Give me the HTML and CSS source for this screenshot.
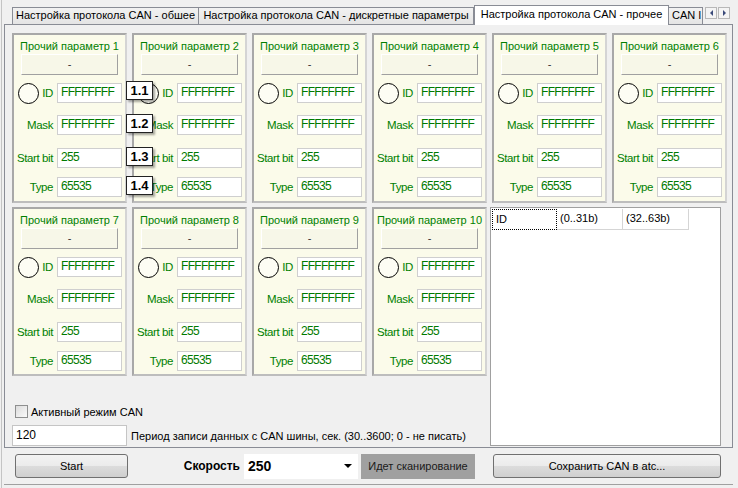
FILE: index.html
```html
<!DOCTYPE html>
<html lang="ru">
<head>
  <meta charset="UTF-8" />
  <title>Настройка протокола CAN</title>
  <link rel="stylesheet" href="styles.css">
</head>
<body>
  <div class="window">
    <div class="tabstrip">
      <div class="tabs">
        <div class="tab t1">Настройка протокола CAN - обшее</div>
        <div class="tab t2">Настройка протокола CAN - дискретные параметры</div>
        <div class="tab t3 active">Настройка протокола CAN - прочее</div>
        <div class="tab t4">CAN I</div>
      </div>
      <div class="scroll">
        <span class="arrow"><i class="tri left"></i></span>
        <span class="arrow"><i class="tri right"></i></span>
      </div>
    </div>

    <div class="page">
      <div class="grid">
        <div class="panel first">
          <div class="title">Прочий параметр 1</div>
          <div class="name">-</div>
          <div class="row r-id"><span class="lamp"></span><label>ID</label><input class="field" value="FFFFFFFF"></div>
          <div class="row r-mask"><label>Mask</label><input class="field" value="FFFFFFFF"></div>
          <div class="row r-start"><label>Start bit</label><input class="field" value="255"></div>
          <div class="row r-type"><label>Type</label><input class="field" value="65535"></div>
          <span class="badge b1">1.1</span>
          <span class="badge b2">1.2</span>
          <span class="badge b3">1.3</span>
          <span class="badge b4">1.4</span>
        </div>
        <div class="panel">
          <div class="title">Прочий параметр 2</div>
          <div class="name">-</div>
          <div class="row r-id"><span class="lamp"></span><label>ID</label><input class="field" value="FFFFFFFF"></div>
          <div class="row r-mask"><label>Mask</label><input class="field" value="FFFFFFFF"></div>
          <div class="row r-start"><label>Start bit</label><input class="field" value="255"></div>
          <div class="row r-type"><label>Type</label><input class="field" value="65535"></div>
        </div>
        <div class="panel">
          <div class="title">Прочий параметр 3</div>
          <div class="name">-</div>
          <div class="row r-id"><span class="lamp"></span><label>ID</label><input class="field" value="FFFFFFFF"></div>
          <div class="row r-mask"><label>Mask</label><input class="field" value="FFFFFFFF"></div>
          <div class="row r-start"><label>Start bit</label><input class="field" value="255"></div>
          <div class="row r-type"><label>Type</label><input class="field" value="65535"></div>
        </div>
        <div class="panel">
          <div class="title">Прочий параметр 4</div>
          <div class="name">-</div>
          <div class="row r-id"><span class="lamp"></span><label>ID</label><input class="field" value="FFFFFFFF"></div>
          <div class="row r-mask"><label>Mask</label><input class="field" value="FFFFFFFF"></div>
          <div class="row r-start"><label>Start bit</label><input class="field" value="255"></div>
          <div class="row r-type"><label>Type</label><input class="field" value="65535"></div>
        </div>
        <div class="panel">
          <div class="title">Прочий параметр 5</div>
          <div class="name">-</div>
          <div class="row r-id"><span class="lamp"></span><label>ID</label><input class="field" value="FFFFFFFF"></div>
          <div class="row r-mask"><label>Mask</label><input class="field" value="FFFFFFFF"></div>
          <div class="row r-start"><label>Start bit</label><input class="field" value="255"></div>
          <div class="row r-type"><label>Type</label><input class="field" value="65535"></div>
        </div>
        <div class="panel">
          <div class="title">Прочий параметр 6</div>
          <div class="name">-</div>
          <div class="row r-id"><span class="lamp"></span><label>ID</label><input class="field" value="FFFFFFFF"></div>
          <div class="row r-mask"><label>Mask</label><input class="field" value="FFFFFFFF"></div>
          <div class="row r-start"><label>Start bit</label><input class="field" value="255"></div>
          <div class="row r-type"><label>Type</label><input class="field" value="65535"></div>
        </div>

        <div class="panel low">
          <div class="title">Прочий параметр 7</div>
          <div class="name">-</div>
          <div class="row r-id"><span class="lamp"></span><label>ID</label><input class="field" value="FFFFFFFF"></div>
          <div class="row r-mask"><label>Mask</label><input class="field" value="FFFFFFFF"></div>
          <div class="row r-start"><label>Start bit</label><input class="field" value="255"></div>
          <div class="row r-type"><label>Type</label><input class="field" value="65535"></div>
        </div>
        <div class="panel low">
          <div class="title">Прочий параметр 8</div>
          <div class="name">-</div>
          <div class="row r-id"><span class="lamp"></span><label>ID</label><input class="field" value="FFFFFFFF"></div>
          <div class="row r-mask"><label>Mask</label><input class="field" value="FFFFFFFF"></div>
          <div class="row r-start"><label>Start bit</label><input class="field" value="255"></div>
          <div class="row r-type"><label>Type</label><input class="field" value="65535"></div>
        </div>
        <div class="panel low">
          <div class="title">Прочий параметр 9</div>
          <div class="name">-</div>
          <div class="row r-id"><span class="lamp"></span><label>ID</label><input class="field" value="FFFFFFFF"></div>
          <div class="row r-mask"><label>Mask</label><input class="field" value="FFFFFFFF"></div>
          <div class="row r-start"><label>Start bit</label><input class="field" value="255"></div>
          <div class="row r-type"><label>Type</label><input class="field" value="65535"></div>
        </div>
        <div class="panel low">
          <div class="title">Прочий параметр 10</div>
          <div class="name">-</div>
          <div class="row r-id"><span class="lamp"></span><label>ID</label><input class="field" value="FFFFFFFF"></div>
          <div class="row r-mask"><label>Mask</label><input class="field" value="FFFFFFFF"></div>
          <div class="row r-start"><label>Start bit</label><input class="field" value="255"></div>
          <div class="row r-type"><label>Type</label><input class="field" value="65535"></div>
        </div>

        <div class="listview">
          <div class="lv-head">
            <div class="lv-col focus">ID</div>
            <div class="lv-col">(0..31b)</div>
            <div class="lv-col">(32..63b)</div>
          </div>
        </div>

        <div class="check-row">
          <span class="checkbox"></span>
          <span>Активный режим CAN</span>
        </div>

        <div class="period-row">
          <input class="period" value="120">
          <span>Период записи данных с CAN шины, сек. (30..3600; 0 - не писать)</span>
        </div>
      </div>
    </div>

    <div class="bottombar">
      <button class="btn start">Start</button>
      <span class="speed-label">Скорость</span>
      <div class="combo"><span>250</span><span class="drop"></span></div>
      <div class="scanning">Идет сканирование</div>
      <button class="btn save">Сохранить CAN в atc...</button>
    </div>
  </div>
</body>
</html>
```

FILE: styles.css
```css
* {
  box-sizing: border-box;
}

body {
  margin: 0;
  background: #f0f0f0;
  font-family: "Liberation Sans", Arial, sans-serif;
  font-size: 11px;
  color: #000;
}

.window {
  width: 738px;
  height: 488px;
  border-left: 1px solid #c4c4c4;
  margin-left: 1px;
  overflow: hidden;
}

/* tabs */
.tabstrip {
  display: flex;
  align-items: flex-end;
  height: 25px;
  padding-left: 8px;
  margin-left: 2px;
  width: 729px;
}

.tabs {
  display: flex;
  align-items: flex-end;
  width: 691px;
  flex: none;
  height: 25px;
}

.tab {
  flex: none;
  height: 17px;
  line-height: 14px;
  text-align: center;
  white-space: nowrap;
  overflow: hidden;
  border: 1px solid #898c95;
  border-bottom: none;
  background: linear-gradient(#f2f2f2, #e4e4e4);
  margin-bottom: 1px;
}

.tab.t1 { width: 187px; }
.tab.t2 { width: 276px; margin-left: -1px; }
.tab.t3 { width: 195px; }
.tab.t4 { width: 35px; margin-left: -1px; text-align: left; padding-left: 3px; }

.tab.active {
  height: 20px;
  line-height: 16px;
  background: #fff;
  margin-bottom: 0;
  position: relative;
  z-index: 1;
}

.scroll {
  display: flex;
  gap: 1px;
  align-self: flex-start;
  margin-top: 7px;
  margin-left: 2px;
}

.arrow {
  display: flex;
  align-items: center;
  justify-content: center;
  width: 12px;
  height: 12px;
  border: 1px solid #b8b8b8;
  background: #f4f4f4;
}

.tri {
  width: 0;
  height: 0;
  border-top: 3px solid transparent;
  border-bottom: 3px solid transparent;
}

.tri.left { border-right: 3px solid #3a4a7a; }
.tri.right { border-left: 3px solid #3a4a7a; }

.page {
  margin-left: 2px;
  width: 729px;
  height: 424px;
  border: 1px solid #898c95;
  margin-top: -1px;
  padding: 8px 0 0 7px;
}

.grid {
  display: grid;
  grid-template-columns: repeat(6, 115px);
  grid-template-rows: 170px 169px 41px 21px;
  column-gap: 5px;
  row-gap: 4px;
}

/* parameter panel */
.panel {
  position: relative;
  background: #fbfbea;
  border: 2px solid #a8a8a8;
  border-right-color: #d4d4d4;
  border-bottom-color: #bdbdbd;
  padding: 4px 0 0 2px;
}

.panel.low {
  grid-row: 2;
}

.title {
  color: #008000;
  text-align: center;
  line-height: 14px;
  white-space: nowrap;
  margin-left: -2px;
}

.name {
  margin: 1px 0 0 5px;
  width: 97px;
  height: 21px;
  line-height: 18px;
  text-align: center;
  background: #f7f7e8;
  border: 1px solid #fff;
  border-right-color: #a0a0a0;
  border-bottom-color: #a0a0a0;
  color: #333;
}

.row {
  display: flex;
  align-items: center;
  height: 20px;
  margin-top: 12px;
}

.row.r-id { margin-top: 8px; }
.row.r-start { margin-top: 13px; }
.row.r-type { margin-top: 9px; }

.row label {
  flex: 1;
  text-align: right;
  color: #008000;
  font-size: 11.5px;
  letter-spacing: -0.4px;
  padding-right: 4px;
  white-space: nowrap;
}

.lamp {
  flex: none;
  width: 21px;
  height: 21px;
  margin-left: 2px;
  border: 1px solid #000;
  border-radius: 50%;
  background: #fdfdf4;
}

.field {
  width: 65px;
  height: 20px;
  margin-right: 3px;
  border: 1px solid #cfcfcf;
  background: #fff;
  color: #007a00;
  font-family: inherit;
  font-size: 12px;
  letter-spacing: -0.7px;
  padding: 0 0 2px 3px;
  outline: none;
}

.badge {
  position: absolute;
  left: 112px;
  z-index: 2;
  width: 27px;
  height: 19px;
  background: #fff;
  border: 1px solid #222;
  box-shadow: 2px 2px 2px rgba(0, 0, 0, 0.35);
  font-weight: bold;
  font-size: 13px;
  line-height: 17px;
  text-align: center;
}

.b1 { top: 46px; }
.b2 { top: 79px; }
.b3 { top: 112px; }
.b4 { top: 141px; }

/* list view */
.listview {
  grid-column: 5 / 7;
  grid-row: 2 / 5;
  margin-left: -2px;
  width: 231px;
  background: #fff;
  border: 1px solid #a0a0a0;
  padding: 1px;
}

.lv-head {
  display: flex;
  height: 21px;
}

.lv-col {
  width: 66px;
  border-right: 1px solid #d5d5d5;
  border-bottom: 1px solid #d5d5d5;
  padding: 3px 0 0 3px;
}

.lv-col.focus {
  width: 65px;
  border: 1px dotted #000;
}

/* bottom of page */
.check-row {
  grid-column: 1 / 5;
  display: flex;
  align-items: center;
  gap: 3px;
  align-self: end;
  margin: 0 0 3px 3px;
}

.checkbox {
  width: 13px;
  height: 13px;
  border: 1px solid #8e8f8f;
  background: linear-gradient(135deg, #dcdcdc, #fafafa);
}

.period-row {
  grid-column: 1 / 5;
  display: flex;
  align-items: center;
  gap: 4px;
  white-space: nowrap;
}

.period {
  width: 115px;
  height: 21px;
  border: 1px solid #c5c5c5;
  font-family: inherit;
  font-size: 12px;
  padding: 0 0 2px 3px;
  outline: none;
}

.bottombar {
  display: flex;
  align-items: center;
  height: 37px;
  margin-left: 2px;
  width: 729px;
  border-bottom: 1px solid #a0a0a0;
  padding-left: 11px;
}

.btn {
  height: 24px;
  border: 1px solid #707070;
  border-radius: 3px;
  background: linear-gradient(#f3f3f3 0%, #ebebeb 50%, #dcdcdc 51%, #cfcfcf 100%);
  font-family: inherit;
  font-size: 11px;
  color: #000;
}

.btn.start { width: 113px; }

.speed-label {
  width: 112px;
  text-align: right;
  font-weight: bold;
  font-size: 12px;
}

.combo {
  display: flex;
  align-items: center;
  justify-content: space-between;
  width: 114px;
  height: 25px;
  margin-left: 4px;
  background: #fff;
  font-weight: bold;
  font-size: 14px;
  padding: 0 6px 0 4px;
}

.drop {
  width: 0;
  height: 0;
  border-left: 4px solid transparent;
  border-right: 4px solid transparent;
  border-top: 4px solid #000;
}

.scanning {
  width: 114px;
  height: 25px;
  margin-left: 3px;
  background: #a0a0a0;
  color: #1a1a1a;
  line-height: 25px;
  text-align: center;
}

.btn.save {
  width: 228px;
  margin-left: 18px;
}
```
